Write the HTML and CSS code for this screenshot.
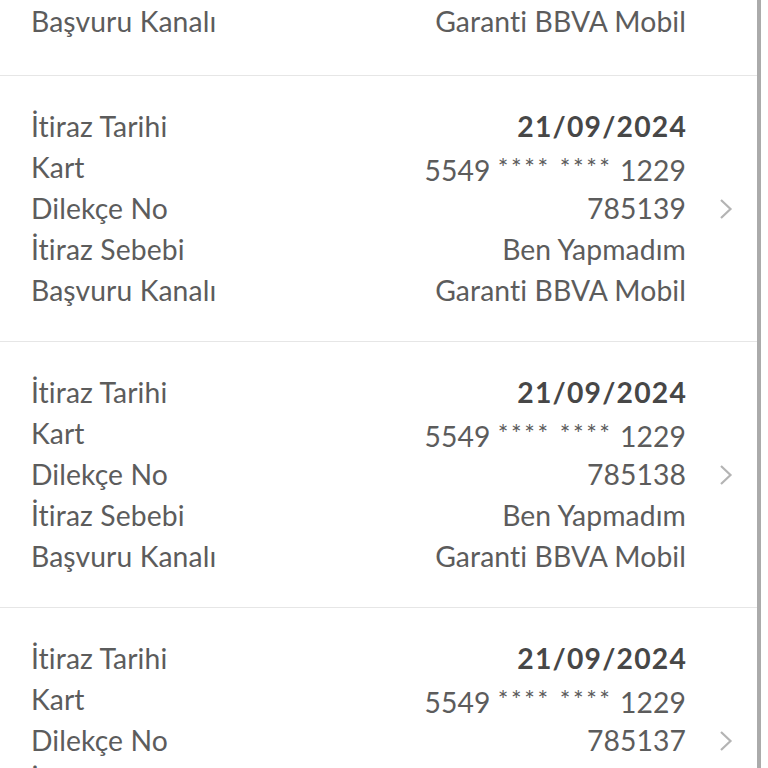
FILE: index.html
```html
<!DOCTYPE html>
<html lang="tr">
<head>
<meta charset="utf-8">
<link rel="stylesheet" href="styles.css">
</head>
<body>
<div class="page">
  <div class="list">
    <div class="group partial">
      <div class="rows">
        <div class="row"><span class="label">Başvuru Kanalı</span><span class="value">Garanti BBVA Mobil</span></div>
      </div>
      <div class="chev-space"></div>
    </div>
    <div class="group">
      <div class="rows">
        <div class="row"><span class="label">İtiraz Tarihi</span><span class="value bold">21/09/2024</span></div>
        <div class="row"><span class="label">Kart</span><span class="value">5549 <span class="mask">**** ****</span> 1229</span></div>
        <div class="row"><span class="label">Dilekçe No</span><span class="value">785139</span></div>
        <div class="row"><span class="label">İtiraz Sebebi</span><span class="value">Ben Yapmadım</span></div>
        <div class="row"><span class="label">Başvuru Kanalı</span><span class="value">Garanti BBVA Mobil</span></div>
      </div>
      <svg class="chev" width="14" height="22" viewBox="0 0 14 22"><path d="M2 2 L11.5 11 L2 20" fill="none" stroke="#b4b4b4" stroke-width="2.2"/></svg>
    </div>
    <div class="group">
      <div class="rows">
        <div class="row"><span class="label">İtiraz Tarihi</span><span class="value bold">21/09/2024</span></div>
        <div class="row"><span class="label">Kart</span><span class="value">5549 <span class="mask">**** ****</span> 1229</span></div>
        <div class="row"><span class="label">Dilekçe No</span><span class="value">785138</span></div>
        <div class="row"><span class="label">İtiraz Sebebi</span><span class="value">Ben Yapmadım</span></div>
        <div class="row"><span class="label">Başvuru Kanalı</span><span class="value">Garanti BBVA Mobil</span></div>
      </div>
      <svg class="chev" width="14" height="22" viewBox="0 0 14 22"><path d="M2 2 L11.5 11 L2 20" fill="none" stroke="#b4b4b4" stroke-width="2.2"/></svg>
    </div>
    <div class="group">
      <div class="rows">
        <div class="row"><span class="label">İtiraz Tarihi</span><span class="value bold">21/09/2024</span></div>
        <div class="row"><span class="label">Kart</span><span class="value">5549 <span class="mask">**** ****</span> 1229</span></div>
        <div class="row"><span class="label">Dilekçe No</span><span class="value">785137</span></div>
        <div class="row"><span class="label">İtiraz Sebebi</span><span class="value">Ben Yapmadım</span></div>
        <div class="row"><span class="label">Başvuru Kanalı</span><span class="value">Garanti BBVA Mobil</span></div>
      </div>
      <svg class="chev" width="14" height="22" viewBox="0 0 14 22"><path d="M2 2 L11.5 11 L2 20" fill="none" stroke="#b4b4b4" stroke-width="2.2"/></svg>
    </div>
  </div>
</div>
</body>
</html>
```
FILE: styles.css
```css
html, body {
  margin: 0;
  padding: 0;
  background: #fff;
}
body {
  font-family: Lato, "Open Sans", sans-serif;
  color: #5c5c5c;
  height: 768px;
  overflow: hidden;
}
.page {
  width: 757px;
  height: 768px;
  border-right: 4px solid #ababab;
  overflow: hidden;
}
.group {
  display: flex;
  align-items: center;
  padding: 30px 0 30px 31px;
  border-bottom: 1.5px solid #e6e6e6;
}
.group.partial {
  padding-top: 1px;
  padding-bottom: 33px;
}
.rows {
  width: 655px;
}
.row {
  display: flex;
  justify-content: space-between;
  height: 41px;
  line-height: 41px;
  font-size: 28.3px;
  letter-spacing: 0.1px;
}
.bold {
  font-weight: 700;
  color: #474747;
  letter-spacing: 1.2px;
  margin-right: -1px;
}
.mask {
  font-size: 25px;
  letter-spacing: 2.6px;
  vertical-align: 4px;
}
.chev {
  margin-left: 33px;
}
.chev-space {
  width: 14px;
  margin-left: 33px;
}
```
